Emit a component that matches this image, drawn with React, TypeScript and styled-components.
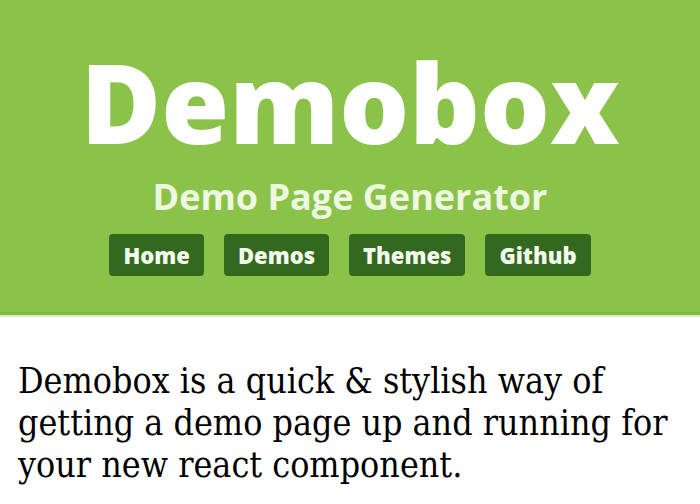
import React from "react";
import styled, { createGlobalStyle } from "styled-components";

const Global = createGlobalStyle`
  html, body { margin: 0; padding: 0; background: #ffffff; }
  body { width: 700px; height: 504px; overflow: hidden; }
`;

const Header = styled.header`
  background: #8bc34a;
  padding: 46px 0 36px;
  border-bottom: 3px solid #7fbb3e;
  box-shadow: 0 2px 0 #d9ecc4;
  display: flex;
  flex-direction: column;
  align-items: center;
  font-family: "Open Sans", sans-serif;
`;

const Title = styled.h1`
  margin: 0;
  font-size: 110px;
  font-weight: 800;
  line-height: 1;
  color: #ffffff;
`;

const Subtitle = styled.h2`
  margin: 23px 0 0;
  font-size: 36px;
  font-weight: 700;
  line-height: 1;
  color: #eef7e0;
`;

const Nav = styled.nav`
  display: flex;
  gap: 20px;
  margin-top: 19px;
`;

const NavButton = styled.a`
  display: flex;
  align-items: center;
  height: 42px;
  padding: 0 14px;
  box-sizing: border-box;
  background: #33691e;
  border-radius: 4px;
  color: #f4f9ee;
  font-size: 22px;
  font-weight: 800;
  text-decoration: none;
`;

const Main = styled.main`
  padding: 45px 18px 0;
  width: 700px;
  box-sizing: border-box;
`;

const Intro = styled.p`
  margin: 0;
  font-family: "DejaVu Serif", serif;
  font-stretch: condensed;
  font-size: 35.5px;
  line-height: 42px;
  color: #000;
`;

export default function App() {
  return (
    <>
      <Global />
      <Header>
        <Title>Demobox</Title>
        <Subtitle>Demo Page Generator</Subtitle>
        <Nav>
          <NavButton href="#">Home</NavButton>
          <NavButton href="#">Demos</NavButton>
          <NavButton href="#">Themes</NavButton>
          <NavButton href="#">Github</NavButton>
        </Nav>
      </Header>
      <Main>
        <Intro>
          Demobox is a quick &amp; stylish way of getting a demo page up and running for your new react component.
        </Intro>
      </Main>
    </>
  );
}
